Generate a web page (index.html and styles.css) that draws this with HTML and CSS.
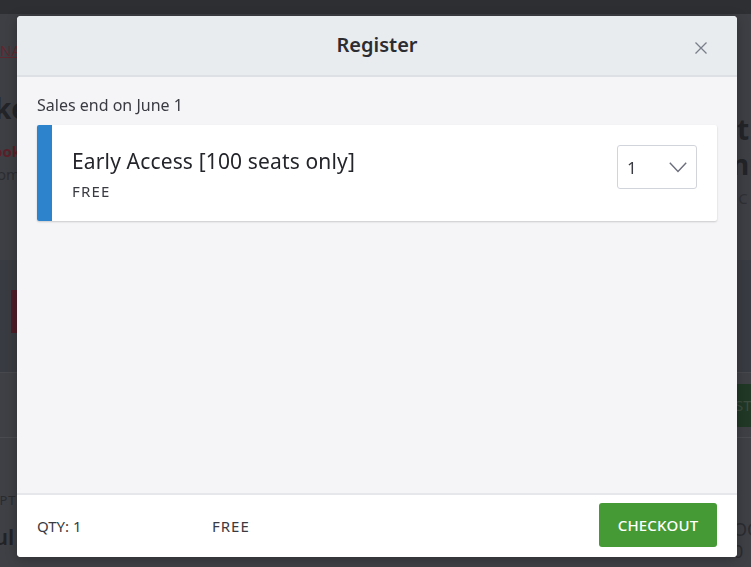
FILE: index.html
```html
<!DOCTYPE html>
<html lang="en">
<head>
<meta charset="utf-8">
<title>Register</title>
<link rel="stylesheet" href="styles.css">
</head>
<body>
<div class="page">
  <div class="topbar"></div>
  <div class="hero">
    <div class="hero-left">
      <span class="nav-link">NAV</span>
      <span class="hero-big">ke</span>
      <span class="hero-red">ook</span>
      <span class="hero-small">om</span>
    </div>
    <div class="hero-right">
      <span class="hero-big r1">t</span>
      <span class="hero-big r2">nn</span>
      <span class="hero-small r3">g C</span>
    </div>
  </div>
  <div class="banner"><div class="banner-red"></div></div>
  <div class="actionbar"><div class="bg-btn">ST</div></div>
  <div class="desc">
    <div class="desc-left">
      <span class="desc-label">IPT</span>
      <span class="desc-big">ul</span>
    </div>
    <div class="desc-right">
      <span class="desc-num">OC</span>
      <span class="desc-num">0</span>
    </div>
  </div>
  <div class="desc-line">to lifetime customers and dominate your</div>
</div>

<div class="modal" role="dialog" aria-label="Register">
  <header class="modal-header">
    <h1 class="modal-title">Register</h1>
    <button class="close-btn" aria-label="Close">
      <svg width="12" height="12" viewBox="0 0 12 12"><path d="M0.5 0.5 L11.5 11.5 M11.5 0.5 L0.5 11.5" stroke="#7a7d8a" stroke-width="1.3" fill="none"/></svg>
    </button>
  </header>
  <main class="modal-body">
    <p class="sales-end">Sales end on June 1</p>
    <div class="ticket">
      <div class="ticket-bar"></div>
      <div class="ticket-content">
        <div class="ticket-info">
          <div class="ticket-name">Early Access [100 seats only]</div>
          <div class="ticket-price">FREE</div>
        </div>
        <div class="qty-select">
          <span class="qty-value">1</span>
          <svg class="chevron" width="18" height="11" viewBox="0 0 18 11"><path d="M0.8 0.8 L9 9.5 L17.2 0.8" stroke="#6b6e7c" stroke-width="1.4" fill="none"/></svg>
        </div>
      </div>
    </div>
  </main>
  <footer class="modal-footer">
    <span class="footer-qty">QTY: 1</span>
    <span class="footer-total">FREE</span>
    <button class="checkout-btn">CHECKOUT</button>
  </footer>
</div>
</body>
</html>
```

FILE: styles.css
```css
* { box-sizing: border-box; }

html, body {
  margin: 0;
  padding: 0;
}

body {
  width: 751px;
  height: 567px;
  overflow: hidden;
  background: #3f4045;
  font-family: "Noto Sans", "Open Sans", sans-serif;
}

/* dimmed page behind the dialog */
.page {
  width: 751px;
  height: 567px;
  overflow: hidden;
  color: #26272b;
}

.topbar {
  height: 14px;
  background: #2e2f33;
}

.hero {
  height: 246px;
  display: flex;
  justify-content: space-between;
  background: #3e3f44;
}

.hero-left {
  display: flex;
  flex-direction: column;
  align-items: flex-start;
  margin-left: 0;
  padding-top: 26px;
}

.nav-link {
  font-size: 15px;
  color: #5e2830;
  text-decoration: underline;
  line-height: 20px;
}

.hero-big {
  font-size: 30px;
  font-weight: 700;
  line-height: 36px;
  color: #232428;
}

.hero-left .hero-big { margin-top: 30px; margin-left: -6px; font-size: 28px; }

.hero-red {
  margin-top: 14px;
  font-size: 15px;
  font-weight: 700;
  color: #5a2029;
  line-height: 22px;
  margin-left: -7px;
}

.hero-small {
  font-size: 15px;
  line-height: 24px;
  color: #2c2d31;
  margin-left: -3px;
}

.hero-right {
  display: flex;
  flex-direction: column;
  align-items: flex-start;
  width: 16px;
  padding-top: 98px;
}

.hero-right .r1 { font-size: 28px; line-height: 34px; margin-left: 2px; }
.hero-right .r2 { font-size: 28px; line-height: 32px; margin-top: 2px; margin-left: -4px; }
.hero-right .r3 { font-size: 15px; margin-top: 6px; margin-left: -10px; white-space: nowrap; color: #303136; }

.banner {
  height: 113px;
  background: #393b42;
  padding: 30px 0 0 11px;
  border-bottom: 1px solid #47484d;
}

.banner-red {
  width: 8px;
  height: 43px;
  background: #4e1d27;
}

.actionbar {
  height: 65px;
  display: flex;
  justify-content: flex-end;
  align-items: center;
  border-bottom: 1px solid #4a4b50;
}

.bg-btn {
  width: 14px;
  height: 43px;
  background: #213826;
  color: #3d4d40;
  font-size: 15px;
  line-height: 43px;
  overflow: hidden;
  text-indent: -2px;
}

.desc {
  display: flex;
  justify-content: space-between;
  padding-top: 52px;
}

.desc-left {
  display: flex;
  flex-direction: column;
  align-items: flex-start;
  margin-left: -6px;
}

.desc-label {
  font-size: 13px;
  letter-spacing: 1px;
  color: #2a2b2f;
  line-height: 20px;
}

.desc-big {
  margin-top: 12px;
  font-size: 22px;
  font-weight: 600;
  line-height: 28px;
  color: #222327;
}

.desc-right {
  display: flex;
  flex-direction: column;
  width: 14px;
  padding-top: 28px;
}

.desc-num {
  font-size: 18px;
  line-height: 22px;
  color: #2b2c30;
  white-space: nowrap;
  margin-left: -4px;
}

.desc-line {
  font-size: 20px;
  line-height: 26px;
  color: #26272b;
  margin-top: 0;
  margin-left: -2px;
  white-space: nowrap;
}

/* dialog */
.modal {
  position: fixed;
  left: 17px;
  top: 16px;
  width: 720px;
  height: 541px;
  display: flex;
  flex-direction: column;
  background: #f5f5f7;
  border-radius: 4px;
  overflow: hidden;
  box-shadow: 0 2px 12px rgba(0, 0, 0, 0.25);
}

.modal-header {
  position: relative;
  height: 61px;
  flex: none;
  display: flex;
  align-items: center;
  justify-content: center;
  background: #e9ecef;
  border-bottom: 2px solid #dde0e4;
}

.modal-title {
  margin: 0;
  font-size: 20px;
  font-weight: 600;
  color: #2c2d33;
  line-height: 28px;
  padding-bottom: 1px;
}

.close-btn {
  position: absolute;
  right: 30px;
  top: 26px;
  width: 12px;
  height: 12px;
  padding: 0;
  border: 0;
  background: none;
  display: flex;
}

.modal-body {
  flex: 1;
  padding: 18px 20px 0;
}

.sales-end {
  margin: 0;
  font-size: 16px;
  line-height: 20px;
  color: #3a3b42;
}

.ticket {
  margin-top: 10px;
  display: flex;
  background: #ffffff;
  box-shadow: 0 1px 2px rgba(0, 0, 0, 0.18);
  border-radius: 2px;
  overflow: hidden;
}

.ticket-bar {
  width: 15px;
  flex: none;
  background: #2d84cc;
}

.ticket-content {
  flex: 1;
  display: flex;
  justify-content: space-between;
  align-items: flex-start;
  padding: 20px 20px 20px 20px;
}

.ticket-info {
  padding-top: 2px;
}

.ticket-name {
  font-size: 21px;
  line-height: 28px;
  color: #24252b;
  letter-spacing: 0.15px;
}

.ticket-price {
  margin-top: 6px;
  font-size: 15px;
  line-height: 20px;
  letter-spacing: 1.2px;
  color: #3a3b42;
}

.qty-select {
  width: 80px;
  height: 44px;
  border: 1px solid #d2d4db;
  border-radius: 3px;
  display: flex;
  align-items: center;
  justify-content: space-between;
  padding: 0 9px 0 9px;
}

.qty-value {
  font-size: 17px;
  color: #3a3b42;
  line-height: 20px;
  padding-top: 2px;
}

.chevron {
  display: block;
  margin-top: 1px;
}

.modal-footer {
  height: 64px;
  flex: none;
  display: flex;
  align-items: center;
  background: #ffffff;
  border-top: 2px solid #e6e7ea;
  padding: 0 20px;
  font-size: 15px;
  color: #3a3b42;
}

.footer-qty {
  width: 175px;
}

.footer-total {
  flex: 1;
  letter-spacing: 1px;
}

.checkout-btn {
  width: 118px;
  height: 44px;
  margin-top: -2px;
  border: 0;
  border-radius: 3px;
  background: #459a35;
  color: #ffffff;
  font-family: "Noto Sans", sans-serif;
  font-size: 15px;
  font-weight: 500;
  letter-spacing: 0.2px;
}
```
